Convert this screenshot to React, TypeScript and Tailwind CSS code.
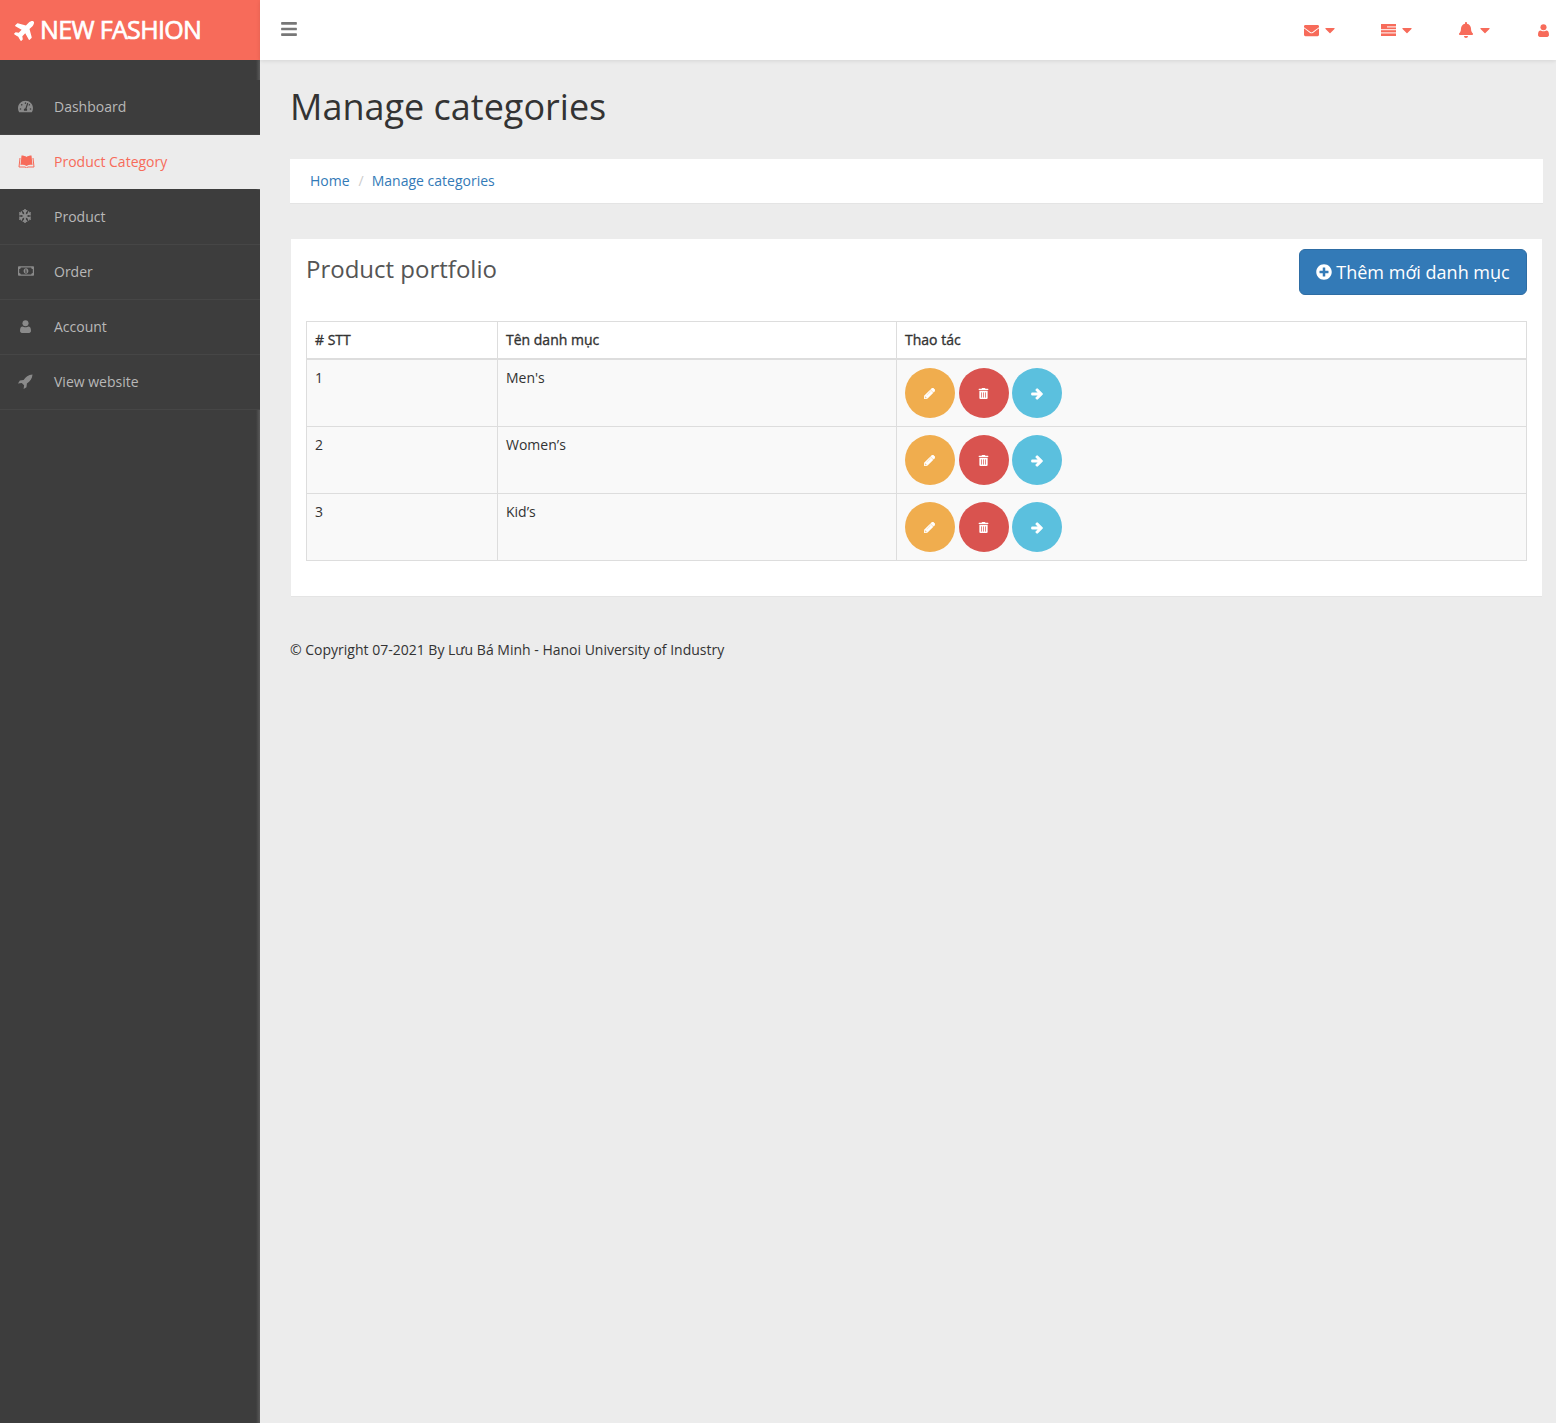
import { FaPlane, FaTachometerAlt, FaSnowflake, FaRegMoneyBillAlt, FaEnvelope, FaBell, FaPencilAlt, FaTrashAlt, FaArrowRight, FaPlusCircle, FaBars, FaCaretDown } from 'react-icons/fa';
import type { ReactNode } from 'react';

const FlagIcon = () => (
  <svg width="15" height="12" viewBox="0 0 15 12" className="block">
    <rect width="15" height="12" fill="#f76b5a" />
    <rect x="6" y="2.4" width="9" height="1" fill="#fff" />
    <rect x="0" y="5.2" width="15" height="1" fill="#fff" />
    <rect x="0" y="8.4" width="15" height="1" fill="#fff" />
  </svg>
);

const BookIcon = () => (
  <svg width="17" height="13" viewBox="0 0 16 13" fill="currentColor">
    <path d="M3 .5C5 .5 7 1 8 2c1-1 3-1.500 5-1.500l1 9.500c-2-.5-4-.3-6 1-2-1.300-4-1.500-6-1z" />
    <path d="M1.500 3 .5 12H6.500L8 12.800 9.500 12H15.500L14.500 3" fill="none" stroke="currentColor" strokeWidth="1" />
  </svg>
);

const UserIcon = ({ className }: { className?: string }) => (
  <svg width="11" height="13" viewBox="0 0 12 14" fill="currentColor" className={className}>
    <circle cx="6" cy="3.500" r="3.300" />
    <path d="M0 12C0 8.500 1 7 3 7c1 1 5 1 6 0 2 0 3 1.500 3 5 0 1.300-1 2-2 2H2c-1 0-2-.7-2-2z" />
  </svg>
);

const RocketIcon = () => (
  <svg width="15" height="15" viewBox="0 0 16 16" fill="currentColor">
    <path d="M15.500.5C11 1 8 3 6 6.500L2 7 0 10l4-.5L6.500 12 6 16l3-2 .5-4C13 8 15 5 15.500.5z" />
  </svg>
);

const menu: { label: string; icon: ReactNode; active?: boolean }[] = [
  { label: 'Dashboard', icon: <FaTachometerAlt size={15} /> },
  { label: 'Product Category', icon: <BookIcon />, active: true },
  { label: 'Product', icon: <FaSnowflake size={14} /> },
  { label: 'Order', icon: <FaRegMoneyBillAlt size={16} /> },
  { label: 'Account', icon: <span className="pl-[2px]"><UserIcon className="block" /></span> },
  { label: 'View website', icon: <RocketIcon /> },
];

const rows = [
  { id: 1, name: "Men's" },
  { id: 2, name: 'Women’s' },
  { id: 3, name: 'Kid’s' },
];

const RoundBtn = ({ className, children }: { className: string; children: ReactNode }) => (
  <button className={`flex h-[50px] w-[50px] items-center justify-center rounded-full pt-[2px] text-white ${className}`}>
    {children}
  </button>
);

const TopIcon = ({ children, className }: { children: ReactNode; className: string }) => (
  <div className={`flex items-center text-[#f76b5a] ${className}`}>
    {children}
    <FaCaretDown size={16} className="ml-[3px]" />
  </div>
);

export default function App() {
  return (
    <div className="flex min-h-[1423px] bg-[#ececec] font-['Open_Sans',sans-serif] text-[14px] text-[#333]">
      {/* Sidebar */}
      <aside className="flex w-[260px] shrink-0 flex-col bg-[#3d3d3d] bg-[linear-gradient(to_left,#5a5a5a_0,#3d3d3d_4px)]">
        <div className="flex h-[60px] items-center bg-[#f76b5a] pl-[14px] text-[25px] font-normal tracking-[-0.65px] text-white [-webkit-text-stroke:0.7px_#fff]">
          <FaPlane size={23} className="mr-[3px] -mt-[2px] -rotate-45" />
          NEW FASHION
        </div>
        <nav className="mt-5 flex flex-col">
          {menu.map((item) => (
            <a
              key={item.label}
              className={
                item.active
                  ? 'mb-px flex h-[54px] items-center bg-[#ececec] pb-[2px] text-[#f76b5a]'
                  : 'flex h-[55px] items-center border-b border-[#464646] bg-[#3d3d3d] pb-[2px] text-[#b8b8b8]'
              }
            >
              <span className={`flex w-[54px] justify-start pl-[18px] ${item.active ? 'text-[#f76b5a]' : 'text-[#8a8a8a]'}`}>
                {item.icon}
              </span>
              {item.label}
            </a>
          ))}
        </nav>
      </aside>

      <div className="min-w-0 flex-1">
        {/* Top bar */}
        <header className="flex h-[60px] items-center justify-between bg-white pl-[20px] shadow-[0_1px_4px_rgba(0,0,0,0.1)]">
          <FaBars size={18} className="-mt-[3px] text-[#777]" />
          <div className="flex items-center pr-[7px]">
            <TopIcon className="mr-[43px]"><FaEnvelope size={15} /></TopIcon>
            <TopIcon className="mr-[43px]"><FlagIcon /></TopIcon>
            <TopIcon className="mr-[45px]"><FaBell size={16} /></TopIcon>
            <UserIcon className="text-[#f76b5a]" />
          </div>
        </header>

        <main className="pl-[30px] pr-[13px]">
          <h1 className="pt-[20px] text-[36px] leading-[54px] text-[#333]">Manage categories</h1>

          <div className="mt-[25px] flex h-[45px] items-center border-b border-[#e4e4e4] bg-white px-5 pb-[2px]">
            <a className="text-[#337ab7]">Home</a>
            <span className="pl-[9px] pr-[8px] text-[#ccc]">/</span>
            <a className="text-[#337ab7]">Manage categories</a>
          </div>

          <section className="ml-px mr-px mt-[35px] h-[358px] border-b border-[#e4e4e4] bg-white px-[15px] pt-[10px]">
            <div className="flex items-start justify-between">
              <h2 className="text-[24px] leading-[40px] text-[#555]">Product portfolio</h2>
              <button className="flex h-[46px] w-[228px] items-center justify-center rounded-[6px] border border-[#2e6da4] bg-[#337ab7] text-[18px] text-white">
                <FaPlusCircle size={16} className="mr-[4px]" />
                Thêm mới danh mục
              </button>
            </div>

            <table className="mt-[26px] w-full table-fixed border-collapse border border-[#ddd]">
              <thead>
                <tr className="h-[37px] text-left">
                  <th className="w-[191px] border border-b-2 border-[#ddd] px-2 font-normal [-webkit-text-stroke:0.35px_#333]">
                    # STT
                  </th>
                  <th className="w-[399px] border border-b-2 border-[#ddd] px-2 font-normal [-webkit-text-stroke:0.35px_#333]">
                    Tên danh mục
                  </th>
                  <th className="border border-b-2 border-[#ddd] px-2 font-normal [-webkit-text-stroke:0.35px_#333]">Thao tác</th>
                </tr>
              </thead>
              <tbody>
                {rows.map((row) => (
                  <tr key={row.id} className="h-[67px] bg-[#f9f9f9]">
                    <td className="border border-[#ddd] p-2 align-top leading-[20px]">{row.id}</td>
                    <td className="border border-[#ddd] p-2 align-top leading-[20px]">{row.name}</td>
                    <td className="border border-[#ddd] p-2 align-top">
                      <div className="flex gap-[4px]">
                        <RoundBtn className="bg-[#f0ad4e] pr-px"><FaPencilAlt size={11} stroke="currentColor" strokeWidth={30} /></RoundBtn>
                        <RoundBtn className="bg-[#d9534f] pr-px"><FaTrashAlt size={11} /></RoundBtn>
                        <RoundBtn className="-ml-px bg-[#5bc0de]"><FaArrowRight size={12} stroke="currentColor" strokeWidth={50} /></RoundBtn>
                      </div>
                    </td>
                  </tr>
                ))}
              </tbody>
            </table>
          </section>

          <p className="mt-[43px] leading-[20px]">© Copyright 07-2021 By Lưu Bá Minh - Hanoi University of Industry</p>
        </main>
      </div>
    </div>
  );
}
